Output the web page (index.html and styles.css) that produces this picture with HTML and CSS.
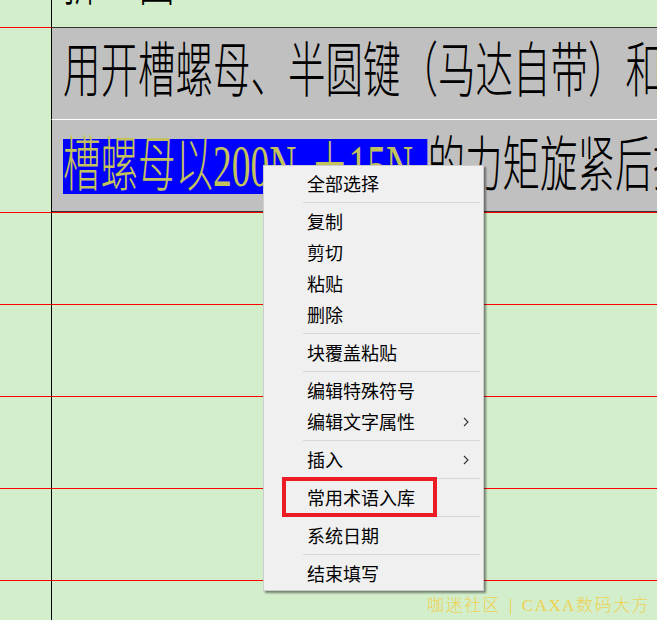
FILE: index.html
```html
<!DOCTYPE html>
<html lang="zh-CN">
<head>
    <meta charset="UTF-8">
    <title>文字编辑</title>
    <link rel="stylesheet" href="styles.css">
</head>
<body>
    <div class="sheet">
        <div class="row row-top">
            <div class="num"></div>
            <div class="cell"><span class="txt">拆三面</span></div>
        </div>
        <div class="row row-gray row-first">
            <div class="num"></div>
            <div class="cell"><span class="txt">用开槽螺母、半圆键（马达自带）和电机轴连接</span></div>
        </div>
        <div class="row row-gray row-second">
            <div class="num"></div>
            <div class="cell"><span class="txt"><span class="sel">槽螺母以200N<small>m</small>＋15N<small>m</small></span>的力矩旋紧后拧紧</span></div>
        </div>
        <div class="row"><div class="num"></div><div class="cell"></div></div>
        <div class="row"><div class="num"></div><div class="cell"></div></div>
        <div class="row"><div class="num"></div><div class="cell"></div></div>
        <div class="row"><div class="num"></div><div class="cell"></div></div>
        <div class="row"><div class="num"></div><div class="cell"></div></div>
    </div>

    <!-- right click menu -->
    <div class="menu">
        <div class="item">全部选择</div>
        <div class="sep"></div>
        <div class="item">复制</div>
        <div class="item">剪切</div>
        <div class="item">粘贴</div>
        <div class="item">删除</div>
        <div class="sep"></div>
        <div class="item">块覆盖粘贴</div>
        <div class="sep"></div>
        <div class="item">编辑特殊符号</div>
        <div class="item">编辑文字属性
            <svg class="arrow" width="6" height="10" viewBox="0 0 6 10"><path d="M1 1l4 4-4 4" fill="none" stroke="#333" stroke-width="1.1"/></svg>
        </div>
        <div class="sep"></div>
        <div class="item">插入
            <svg class="arrow" width="6" height="10" viewBox="0 0 6 10"><path d="M1 1l4 4-4 4" fill="none" stroke="#333" stroke-width="1.1"/></svg>
        </div>
        <div class="sep"></div>
        <div class="item">常用术语入库<div class="mark"></div></div>
        <div class="sep"></div>
        <div class="item">系统日期</div>
        <div class="sep"></div>
        <div class="item">结束填写</div>
    </div>

    <div class="watermark">咖迷社区<span class="bar">|</span>CAXA数码大方</div>
</body>
</html>
```
FILE: styles.css
```css
* {
    box-sizing: border-box;
}
body {
    margin: 0;
    height: 620px;
    overflow: hidden;
    position: relative;
    background: #d3eecb;
    font-family: "Noto Sans CJK SC", sans-serif;
}
.row {
    display: flex;
    height: 92px;
}
.num {
    width: 52px;
    flex: none;
    border-right: 1px solid #000;
    border-bottom: 1px solid #f00;
}
.cell {
    flex: 1;
    min-width: 0;
    overflow: hidden;
    display: flex;
    align-items: center;
    padding-left: 11px;
    border-bottom: 1px solid #f00;
}
.txt {
    display: inline-block;
    white-space: nowrap;
    font-family: "Liberation Serif", "Noto Sans CJK SC", serif;
    font-size: 60px;
    font-weight: 300;
    line-height: 1;
    color: #000;
    margin-top: -3px;
    transform: scaleX(0.625);
    transform-origin: left center;
}
.row-top {
    margin-top: -64px;
}
.row-top .cell {
    border-bottom-color: #333;
}
.row-gray .cell {
    background: #c0c0c0;
}
.row-first .num {
    border-bottom-color: transparent;
}
.row-first .cell {
    border-bottom-color: #fff;
}
.row-second {
    height: 93px;
}
.row-second .cell {
    box-shadow: inset 0 -1px #333;
}
.row-second .txt {
    margin-top: 0;
}
.sel {
    display: inline-block;
    height: 55px;
    line-height: 55px;
    background: #0000ff;
    color: #c4c25a;
}
.sel small {
    font-size: 0.5em;
}

/* menu */
.menu {
    position: absolute;
    left: 263px;
    top: 165px;
    width: 221px;
    padding: 2px 2px 1px 2px;
    background: #f0f0f0;
    border: 1px solid #cdcdcd;
    box-shadow: 2px 2px 2px rgba(0, 0, 0, 0.45);
    font-size: 18px;
    color: #000;
}
.item {
    position: relative;
    height: 31px;
    line-height: 33px;
    padding-left: 41px;
    padding-right: 12px;
    display: flex;
    justify-content: space-between;
    align-items: center;
}
.arrow {
    display: block;
}
.sep {
    height: 1px;
    background: #d7d7d7;
    margin: 3px 1px 3px 37px;
}
.mark {
    position: absolute;
    left: 16px;
    top: -5px;
    width: 155px;
    height: 40px;
    border: 4px solid #ec1c24;
}
.watermark {
    position: absolute;
    right: 7px;
    bottom: 4px;
    font-family: "Liberation Serif", "Noto Sans CJK SC", serif;
    font-size: 17px;
    font-weight: 300;
    letter-spacing: 1.5px;
    color: #f2cf45;
    opacity: 0.9;
}
.bar {
    margin: 0 8px 0 8px;
}
```
